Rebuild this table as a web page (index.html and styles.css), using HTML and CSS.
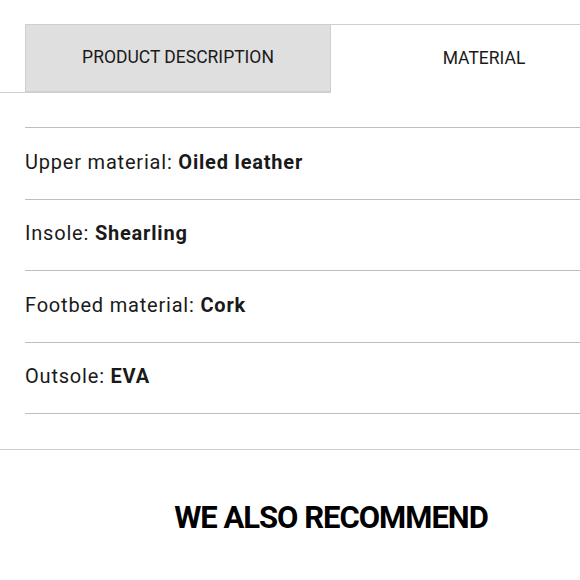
FILE: index.html
```html
<!DOCTYPE html>
<html lang="en">
<head>
<meta charset="utf-8">
<link rel="stylesheet" href="styles.css">
</head>
<body>
<div class="page">
  <div class="tabs">
    <div class="tab tab-inactive">PRODUCT DESCRIPTION</div>
    <div class="tab tab-active">MATERIAL</div>
  </div>
  <ul class="specs">
    <li class="spec"><span>Upper material: <b>Oiled leather</b></span></li>
    <li class="spec"><span>Insole: <b>Shearling</b></span></li>
    <li class="spec"><span>Footbed material: <b>Cork</b></span></li>
    <li class="spec"><span>Outsole: <b>EVA</b></span></li>
  </ul>
  <section class="recommend">
    <h2 class="recommend-title">WE ALSO RECOMMEND</h2>
  </section>
</div>
</body>
</html>
```
FILE: styles.css
```css
html, body {
  margin: 0;
  padding: 0;
  background: #fff;
  overflow: hidden;
}
.page {
  width: 662px;
  font-family: Roboto, "Liberation Sans", sans-serif;
  color: #1a1a1a;
}
.tabs {
  margin-top: 24px;
  padding: 0 25px;
  display: grid;
  grid-template-columns: 306px 306px;
  border-bottom: 1px solid #cfcfcf;
}
.tab {
  height: 68px;
  box-sizing: border-box;
  display: flex;
  align-items: center;
  justify-content: center;
  font-size: 17.5px;
  padding-bottom: 3px;
  margin-bottom: -1px;
}
.tab-inactive {
  background: #dfdfdf;
  border: 1px solid #cfcfcf;
}
.tab-active {
  background: #fff;
  border-top: 1px solid #cfcfcf;
  height: 69px;
}
.specs {
  list-style: none;
  margin: 34px 25px 0;
  padding: 0;
  border-top: 1px solid #bdbdbd;
}
.spec {
  height: 71.5px;
  box-sizing: border-box;
  border-bottom: 1px solid #bdbdbd;
  display: flex;
  align-items: center;
  font-size: 20px;
  letter-spacing: 0.8px;
  padding-bottom: 3px;
}
.spec b {
  font-weight: 700;
}
.recommend {
  margin-top: 35px;
  border-top: 1px solid #cfcfcf;
  padding-top: 49px;
}
.recommend-title {
  margin: 0;
  text-align: center;
  font-size: 31px;
  font-weight: 700;
  letter-spacing: -1px;
  color: #000;
}
```
